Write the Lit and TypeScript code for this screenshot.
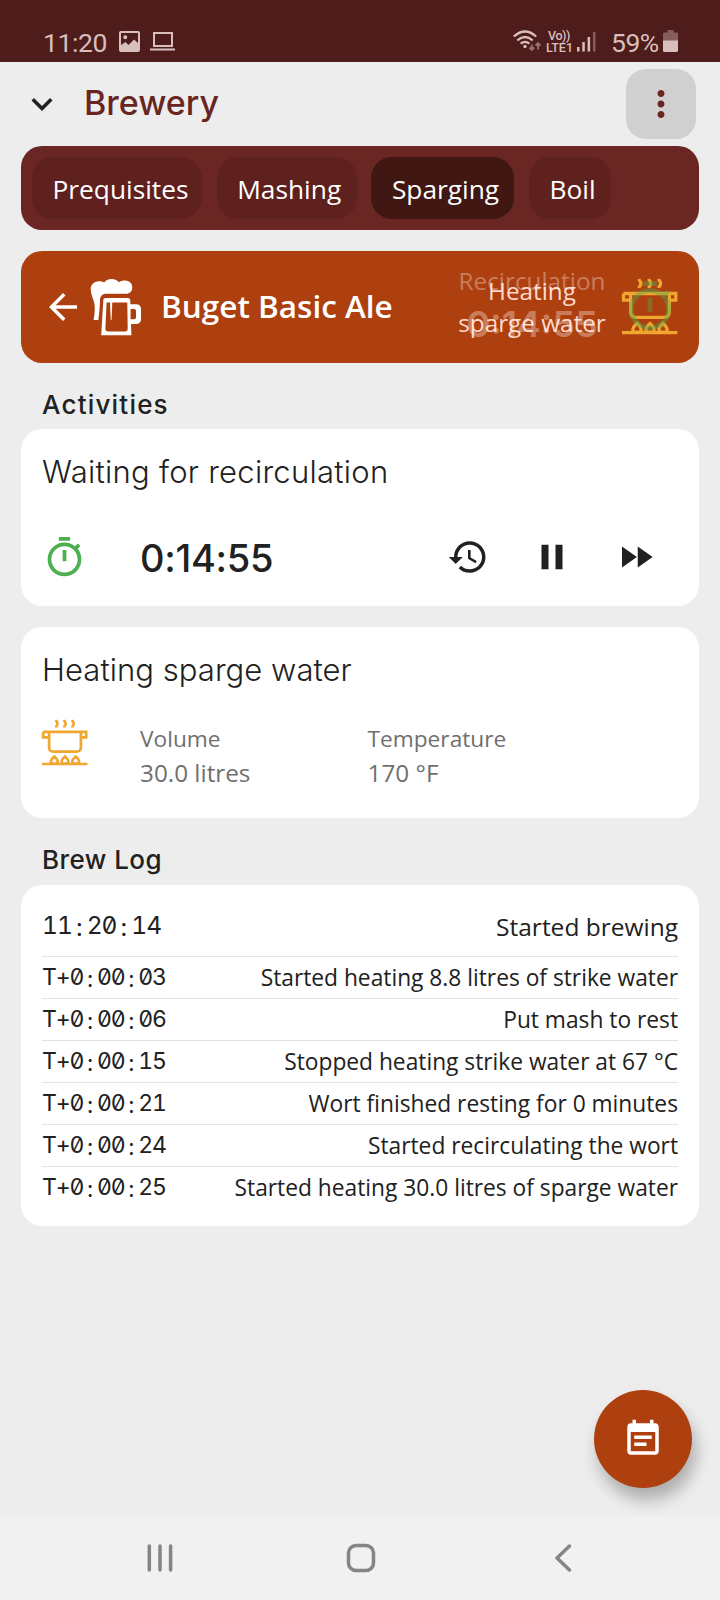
import { LitElement, html, css, svg } from "lit";
import { customElement, property } from "lit/decorators.js";

const ICONS: Record<string, string> = {
  expand: "M16.59 8.59L12 13.17 7.41 8.59 6 10l6 6 6-6z",
  more: "M12 8c1.1 0 2-.9 2-2s-.9-2-2-2-2 .9-2 2 .9 2 2 2zm0 2c-1.1 0-2 .9-2 2s.9 2 2 2 2-.9 2-2-.9-2-2-2zm0 6c-1.1 0-2 .9-2 2s.9 2 2 2 2-.9 2-2-.9-2-2-2z",
  back: "M20 11H7.83l5.59-5.59L12 4l-8 8 8 8 1.41-1.41L7.83 13H20v-2z",
  timer: "M15 1H9v2h6V1zm-4 13h2V8h-2v6zm8.03-6.61l1.42-1.42c-.43-.51-.9-.99-1.41-1.41l-1.42 1.42C16.07 4.74 14.12 4 12 4c-4.97 0-9 4.03-9 9s4.02 9 9 9 9-4.03 9-9c0-2.12-.74-4.07-1.97-5.61zM12 20c-3.87 0-7-3.13-7-7s3.13-7 7-7 7 3.13 7 7-3.13 7-7 7z",
  history: "M13 3c-4.97 0-9 4.03-9 9H1l3.89 3.89.07.14L9 12H6c0-3.87 3.13-7 7-7s7 3.13 7 7-3.13 7-7 7c-1.93 0-3.68-.79-4.94-2.06l-1.42 1.42C8.27 19.99 10.51 21 13 21c4.97 0 9-4.03 9-9s-4.03-9-9-9zm-1 5v5l4.28 2.54.72-1.21-3.5-2.08V8H12z",
  pause: "M6 19h4V5H6v14zm8-14v14h4V5h-4z",
  forward: "M4 18l8.5-6L4 6v12zm9-12v12l8.5-6L13 6z",
  note: "M17 10H7v2h10v-2zm2-7h-1V1h-2v2H8V1H6v2H5c-1.11 0-1.99.9-1.99 2L3 19c0 1.1.89 2 2 2h14c1.1 0 2-.9 2-2V5c0-1.1-.9-2-2-2zm0 16H5V8h14v11zm-5-5H7v2h7v-2z",
};

const flame = (x: number) => svg`<path d="M${x} 36.6C${x - 1.6} 38 ${x - 3.4} 39.6 ${x - 3.4} 41.6C${x - 3.4} 42.6 ${x - 2.8} 43.4 ${x - 2} 43.7H${x + 2}C${x + 2.8} 43.4 ${x + 3.4} 42.6 ${x + 3.4} 41.6C${x + 3.4} 39.6 ${x + 1.6} 38 ${x} 36.6Z"/>`;
const steam = (x: number) => svg`<path d="M${x - 1} 0C${x - 0.4} 1.6 ${x + 0.8} 2.2 ${x + 0.7} 3.8C${x + 0.7} 5.4 ${x - 0.6} 5.800 ${x - 0.9} 7.400"/>`;

@customElement("app-icon")
export class AppIcon extends LitElement {
  @property() name = "";
  static styles = css`
    :host { display: block; width: 42px; height: 42px; flex: none; }
    svg { display: block; width: 100%; height: 100%; fill: currentColor; }
  `;
  render() {
    return html`<svg viewBox="0 0 24 24"><path d=${ICONS[this.name]}></path></svg>`;
  }
}

@customElement("pot-icon")
export class PotIcon extends LitElement {
  static styles = css`
    :host { display: block; flex: none; color: #f0a62f; }
    svg { display: block; width: 100%; height: 100%; fill: none; stroke: currentColor; stroke-width: 2.700; overflow: visible; }
  `;
  render() {
    return html`<svg viewBox="0 0 46 46">
      ${steam(14.8)}${steam(22.9)}${steam(31)}
      <path d="M1.200 11.900H44.200V17.300H39.400M6.600 17.300H1.200V11.900M7.100 12V27.400C7.100 30 9 31.600 11.400 31.600H34.600C37 31.600 38.900 30 38.900 27.400V12"/>
      ${flame(12.3)}${flame(23)}${flame(33.7)}
      <path d="M0 44H45.500"/>
    </svg>`;
  }
}

@customElement("mug-icon")
export class MugIcon extends LitElement {
  static styles = css`
    :host { display: block; width: 52px; height: 58px; flex: none; }
    svg { display: block; width: 52px; height: 58px; fill: currentColor; }
  `;
  render() {
    return html`<svg viewBox="0 0 52 58">
      <path d="M.7 11C.7 6.600 4.600 3.300 9 3.300C11 3.300 12.800 3.900 14.200 4.400C15.600 2.300 18.300 1 21.600 1C25 1 27.500 2.400 28.900 4.300C30.600 2.900 32.800 2.500 35.200 2.600C39.400 2.800 42.300 5.600 42.300 9.500C42.300 13.300 39.700 15.800 36 15.800H17C12.600 15.800 10.300 17.800 10 21.500C9.900 27.500 9.500 34 8.300 42H3.600C4.800 35 5.300 29.500 4.100 24.300C3.300 20.500 .7 16.500 .7 11Z"/>
      <path fill-rule="evenodd" d="M13.300 22.500C13.400 20.700 14.200 20 15.800 20H37.600C39.200 20 40.200 20.800 40.300 22.500V26.300H46C49.200 26.300 51 28 51 31V41.200C51 44.400 49.200 46 46 46H41L41.400 57.300H11.200ZM16.600 24.500L15.400 50.500C15.400 52.500 16.300 53.400 18.100 53.400H35C36.900 53.400 37.700 52.500 37.700 50.500L37.300 24.500H22.300L21.500 42H20.700L20 24.500ZM40.600 31V41.200H44C45.300 41.200 46 40.500 46 39.200V33C46 31.700 45.300 31 44 31Z"/>
    </svg>`;
  }
}

const STEPS = [
  { name: "Prequisites", w: 170 },
  { name: "Mashing", w: 140 },
  { name: "Sparging", w: 143, active: true },
  { name: "Boil", w: 82 },
];

const LOG = [
  ["T+0:00:03", "Started heating 8.8 litres of strike water"],
  ["T+0:00:06", "Put mash to rest"],
  ["T+0:00:15", "Stopped heating strike water at 67 °C"],
  ["T+0:00:21", "Wort finished resting for 0 minutes"],
  ["T+0:00:24", "Started recirculating the wort"],
  ["T+0:00:25", "Started heating 30.0 litres of sparge water"],
];

/* Timestamps sit in equal cells, one per character. */
const stamp = (text: string) => html`<time>${[...text].map((c) => html`<span class=${c === ":" ? "colon" : ""}>${c}</span>`)}</time>`;

@customElement("app-root")
export class AppRoot extends LitElement {
  static styles = css`
    :host { display: flex; flex-direction: column; width: 720px; height: 1600px; background: #ededed; color: #212121; font-family: "Open Sans", sans-serif; position: relative; overflow: hidden; }
    * { box-sizing: border-box; }
    svg { display: block; flex: none; }

    .status { height: 62px; flex: none; background: #4e1c1a; color: #d8bfbd; display: flex; align-items: flex-start; padding: 26px 42px 0 43px; font: 400 26.500px/34px Roboto, sans-serif; }
    .status .clock { width: 76px; letter-spacing: -0.4px; }
    .status .picture { margin: 5px 10px 0 0; }
    .status .laptop { margin-top: 5px; }
    .status .spacer { flex: 1; }
    .status .wifi { margin: 4px 5px 0 0; }
    .volte { font: 500 12.500px/12px Roboto, sans-serif; width: 29px; padding-top: 4px; white-space: nowrap; }
    .volte div { height: 12px; }
    .volte .vo { padding-left: 2px; letter-spacing: -0.4px; }
    .signal { margin: 6px 14px 0 2px; }
    .charge { width: 52px; letter-spacing: -0.5px; white-space: nowrap; }
    .battery { margin-top: 4px; }

    .bar { height: 84px; flex: none; display: flex; align-items: center; padding: 0 24.500px 0 21px; }
    .bar h1 { margin: 0 0 2px 21px; flex: 1; font: 500 34px/44px Inter, sans-serif; color: #692521; }
    .menu { width: 70px; height: 70px; border-radius: 20px; background: #d0d0d0; color: #692521; display: grid; place-items: center; }

    .steps { height: 84px; margin: 0 21px; padding: 0 11px; border-radius: 21px; background: #6a2623; display: flex; align-items: center; gap: 14.700px; flex: none; }
    .step { height: 62px; border-radius: 21px; background: #5f211e; color: #fff; padding: 1px 0 0 20.500px; font-size: 26.300px; line-height: 62px; white-space: nowrap; }
    .step.active { background: #401713; }

    .brew { height: 112px; margin: 21px 21px 0; padding: 0 21px; border-radius: 21px; background: #ae3f0e; color: #fff; display: flex; align-items: center; flex: none; }
    .brew mug-icon { margin-left: 6px; }
    .brew h2 { margin: 0 0 2px 19px; flex: 1; font-size: 31.500px; font-weight: 600; line-height: 42px; white-space: nowrap; }
    .phases { display: grid; width: 160px; margin-right: 10px; }
    .phases > div { grid-area: 1 / 1; text-align: center; font-size: 24.300px; line-height: 32.500px; white-space: nowrap; }
    .fading { opacity: 0.32; margin-top: -3px; }
    .fading strong { display: block; font: 600 36px/44px Inter, sans-serif; padding-top: 4px; }
    .arriving { color: #ffd9cc; align-self: center; }
    .glyphs { display: grid; width: 56px; height: 56px; }
    .glyphs > * { grid-area: 1 / 1; width: 56px; height: 56px; }
    .glyphs app-icon { color: #4caf50; opacity: 0.42; }

    h3 { margin: 0 42px; height: 66px; flex: none; font: 500 26px/34px Inter, sans-serif; padding: 25px 0 0; white-space: nowrap; }
    .activities { letter-spacing: 1.200px; }
    .logtitle { letter-spacing: 0.450px; height: 67px; }
    .card { margin: 0 21px; padding: 0 21px; border-radius: 21px; background: #fff; flex: none; }
    .card h4 { margin: 0; font: 300 31px/40px Inter, sans-serif; padding-top: 23px; letter-spacing: 0.050px; }
    .wait { height: 177px; }
    .wait h4 { letter-spacing: 0.270px; }
    .timer { display: flex; align-items: center; margin-top: 42px; height: 46px; }
    .timer .watch { width: 45px; height: 45px; color: #4caf50; }
    .timer time { font: 500 38px/46px Inter, sans-serif; margin-left: 53px; flex: 1; letter-spacing: -0.300px; padding-top: 1px; }
    .controls { display: flex; gap: 42px; margin-right: 21.500px; }
    .heat { height: 191px; margin-top: 21px; }
    .facts { display: flex; margin-top: 30px; color: #6f6f6f; font-size: 24.300px; line-height: 34px; }
    .facts pot-icon { width: 46px; height: 46px; margin-right: 52px; }
    .facts div { width: 227.500px; padding-top: 2px; }
    .facts b { display: block; font-weight: 400; font-size: 22.700px; }

    .log { height: 341px; padding-top: 14px; font-size: 22.750px; }
    .row { display: flex; justify-content: space-between; align-items: center; height: 42px; border-top: 1px solid #e3e3e3; white-space: nowrap; }
    .row.first { height: 57px; border-top: 0; font-size: 24.500px; padding-bottom: 2px; }
    .row time { display: flex; font-family: Inter, sans-serif; font-size: 23px; font-feature-settings: "tnum", "zero", "calt" 0; }
    .row time span { width: 13.750px; text-align: center; }
    .row time .colon { padding-top: 2px; }
    .row.first time { font-size: 24.500px; padding-bottom: 2px; }
    .row.first time span { width: 14.900px; }

    .fab { position: absolute; left: 594px; top: 1390px; width: 98px; height: 98px; border-radius: 50%; background: #ae3f0e; color: #fff; display: grid; place-items: center; box-shadow: 4px 12px 16px rgba(0, 0, 0, 0.27); }
    .nav { margin-top: auto; height: 84px; flex: none; background: #f1f1f1; display: flex; justify-content: space-between; align-items: center; padding: 0 140px 0 142px; }
    .nav svg { width: 36px; height: 36px; fill: none; stroke: #858585; stroke-width: 3.500; stroke-linecap: round; stroke-linejoin: round; }
  `;

  render() {
    return html`
      <header class="status">
        <span class="clock">11:20</span>
        <svg class="picture" width="21" height="21" viewBox="0 0 21 21" fill="#d8bfbd"><path fill-rule="evenodd" d="M2 0H19Q21 0 21 2V19Q21 21 19 21H2Q0 21 0 19V2Q0 0 2 0ZM2 2V14L6.500 11L9.500 14L15 8.500L19 12V2ZM6.300 4.300A2 2 0 1 1 6.200 4.300Z"/></svg>
        <svg class="laptop" width="25" height="20" viewBox="0 0 25 20" fill="none" stroke="#d8bfbd" stroke-width="2"><rect x="4" y="2" width="18" height="13"/><path d="M0 18.500H25"/></svg>
        <span class="spacer"></span>
        <svg class="wifi" width="28" height="22" viewBox="0 0 28 22" fill="none" stroke="#d8bfbd" stroke-width="2.200">
          <path d="M.8 6.500Q12 -3.500 23.200 6.500M4.300 10.300Q12 3.700 19.700 10.300M7.600 13.600Q12 10 16.400 13.600"/><circle cx="12" cy="16.500" r="1.700" fill="#d8bfbd" stroke="none"/>
          <path stroke="#94706e" stroke-width="1.900" d="M18.800 14.500V20M16.400 17.500L18.800 20L21.200 17.500M25 19.500V13M22.600 15.500L25 13L27.400 15.500"/>
        </svg>
        <div class="volte"><div class="vo">Vo))</div><div>LTE1</div></div>
        <svg class="signal" width="20" height="20" viewBox="0 0 20 20" fill="#d8bfbd"><rect x="0" y="15" width="2.500" height="4.500"/><rect x="5.300" y="10" width="2.500" height="9.500"/><rect x="10.600" y="5" width="2.500" height="14.500"/><rect x="16" y="0" width="2.500" height="19.500" opacity=".4"/></svg>
        <span class="charge">59%</span>
        <svg class="battery" width="15" height="22" viewBox="0 0 15 22"><path fill="#865f5d" d="M4.500 0H10.500V2.500H14Q15 2.500 15 3.500V11H0V3.500Q0 2.500 1 2.500H4.500Z"/><path fill="#d8bfbd" d="M0 10.500H15V20.500Q15 22 13.500 22H1.500Q0 22 0 20.500Z"/></svg>
      </header>

      <div class="bar">
        <app-icon name="expand"></app-icon>
        <h1>Brewery</h1>
        <div class="menu"><app-icon name="more"></app-icon></div>
      </div>

      <nav class="steps">
        ${STEPS.map((s) => html`<div class="step ${s.active ? "active" : ""}" style="width:${s.w}px">${s.name}</div>`)}
      </nav>

      <section class="brew">
        <app-icon name="back"></app-icon>
        <mug-icon></mug-icon>
        <h2>Buget Basic Ale</h2>
        <div class="phases">
          <div class="fading">Recirculation<strong>0:14:55</strong></div>
          <div class="arriving">Heating<br />sparge water</div>
        </div>
        <div class="glyphs"><pot-icon></pot-icon><app-icon name="timer"></app-icon></div>
      </section>

      <h3 class="activities">Activities</h3>
      <section class="card wait">
        <h4>Waiting for recirculation</h4>
        <div class="timer">
          <app-icon class="watch" name="timer"></app-icon>
          <time>0:14:55</time>
          <div class="controls">
            <app-icon name="history"></app-icon>
            <app-icon name="pause"></app-icon>
            <app-icon name="forward"></app-icon>
          </div>
        </div>
      </section>

      <section class="card heat">
        <h4>Heating sparge water</h4>
        <div class="facts">
          <pot-icon></pot-icon>
          <div><b>Volume</b>30.0 litres</div>
          <div><b>Temperature</b>170 °F</div>
        </div>
      </section>

      <h3 class="logtitle">Brew Log</h3>
      <section class="card log">
        <div class="row first">${stamp("11:20:14")}<span>Started brewing</span></div>
        ${LOG.map(([t, text]) => html`<div class="row">${stamp(t)}<span>${text}</span></div>`)}
      </section>

      <div class="fab"><app-icon name="note"></app-icon></div>

      <footer class="nav">
        <svg viewBox="0 0 36 36"><path d="M7.300 6V30M18 6V30M28.600 6V30"/></svg>
        <svg viewBox="0 0 36 36"><rect x="5.500" y="5.500" width="25" height="25" rx="7.500"/></svg>
        <svg viewBox="0 0 36 36"><path d="M25.500 6L13 18L25.500 30"/></svg>
      </footer>
    `;
  }
}
